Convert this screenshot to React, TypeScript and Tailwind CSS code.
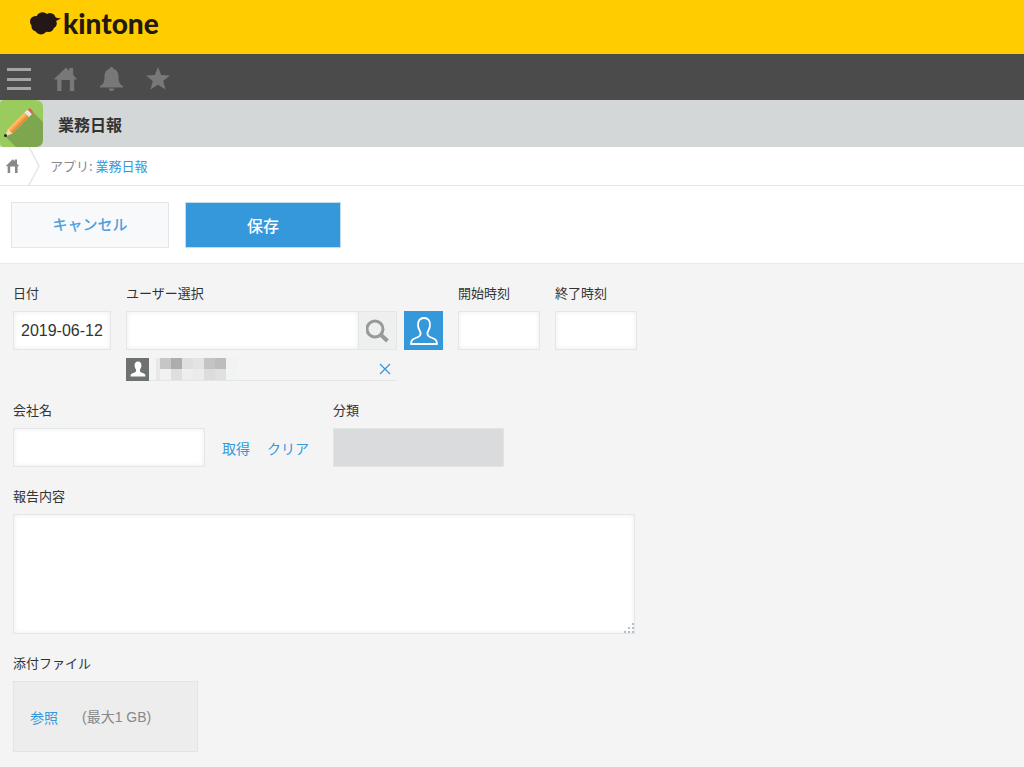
import type { ReactNode } from 'react';

const inputClass =
    'h-[39px] bg-white border border-[#e3e7e8] px-[7px] text-base text-[#333] shadow-[inset_0_0_5px_rgba(0,0,0,0.08)] focus:outline-none focus:border-[#3498db]';

const mosaic = [
    ['bg-[#c6c6c6]', 'bg-[#adadad]', 'bg-[#dfdfe0]', 'bg-[#e3e4e5]', 'bg-[#c4c4c4]', 'bg-[#bdbdbd]', 'bg-[#f1f3f2]', 'bg-[#f4f4f2]'],
    ['bg-[#f1f1f1]', 'bg-[#dedede]', 'bg-[#eeeeef]', 'bg-[#ebebec]', 'bg-[#dcdcdc]', 'bg-[#e0e0e0]', 'bg-[#f2f4f3]', 'bg-[#f4f4f4]'],
];

const HomeIcon = ({ className }: { className: string }) => (
    <svg viewBox="0 0 22 24" className={className} fill="currentColor">
        <path d="M11.500 .5 L14.700 4 V1 H18.700 V8 L22 11.500 V12.500 H19.700 V24 H15.300 V13 H7 V24 H2.700 V12.500 H0 V11.500 Z" />
    </svg>
);

const Logo = () => (
    <a href="#" className="flex items-center gap-[2px] text-[#231815]">
        <svg width="31" height="23" viewBox="0 0 31 23" fill="currentColor">
            <circle cx="5.500" cy="9.500" r="5.500" />
            <circle cx="12.500" cy="6.500" r="6.300" />
            <circle cx="20" cy="6.500" r="5.500" />
            <circle cx="22" cy="11.500" r="4.800" />
            <circle cx="18.500" cy="14.500" r="5.500" />
            <circle cx="11" cy="16.500" r="6" />
            <circle cx="6.500" cy="14.500" r="5" />
            <path d="M7 4 L17 2 L25 10 L22 17 L14 20 L4 17 Z" />
            <path d="M24 4.500 Q27 6.500 31 6.500 Q28 8 25 9.500 Z" />
        </svg>
        <span className="font-['Lato',sans-serif] text-[28px] leading-8 font-black">kintone</span>
    </a>
);

const PencilIcon = () => (
    <svg width="43" height="47" viewBox="0 0 43 47" className="shrink-0">
        <path d="M4 0 H35 Q43 0 43 8 V39 Q43 47 35 47 H4 Q0 47 0 43 V4 Q0 0 4 0 Z" fill="#9acb5f" />
        <path d="M32 11 L43 22 V39 Q43 47 35 47 H16 L5 36 Z" fill="#7ea64f" />
        <path d="M8 29 L24.500 12.500 L29 17 L12.500 33.500 Z" fill="#f5a54a" />
        <path d="M8 29 L24.500 12.500 L26 14 L9.500 30.500 Z" fill="#fcc168" />
        <path d="M11 32 L27.500 15.500 L29 17 L12.500 33.500 Z" fill="#e88a3c" />
        <path d="M24.500 12.500 L27.500 9.500 L32 14 L29 17 Z" fill="#e8e9ea" />
        <path d="M27.500 9.500 Q29.500 7.500 31.500 9.500 Q34 12 32 14 Z" fill="#ee5a50" />
        <path d="M8 29 L12.500 33.500 L5 36.500 Z" fill="#f6d9ae" />
        <circle cx="5.500" cy="35.500" r="1.500" fill="#222" />
    </svg>
);

const PersonIcon = ({ className }: { className: string }) => (
    <svg viewBox="0 0 28 28" className={className} strokeWidth="1.800" strokeLinejoin="round">
        <path d="M14 1 C9.500 1 8 4 8 8 C8 11.500 9.500 13 10.500 15.500 C11 18 10.500 19 8 20 L3.500 22 C1.500 23 1 24.500 1 27 H27 C27 24.500 26.500 23 24.500 22 L20 20 C17.500 19 17 18 17.500 15.500 C18.500 13 20 11.500 20 8 C20 4 18.500 1 14 1 Z" />
    </svg>
);

const Field = ({ label, htmlFor, children }: { label: string; htmlFor: string; children: ReactNode }) => (
    <div className="flex flex-col gap-[9px]">
        <label htmlFor={htmlFor} className="leading-[18px]">
            {label}
        </label>
        {children}
    </div>
);

const App = () => {
    return (
        <div className="min-h-screen flex flex-col bg-[#f4f4f4] font-['Noto_Sans_CJK_JP',sans-serif] text-[13px] text-[#333]">
            <header className="h-[54px] bg-[#ffcc00] px-[30px] pb-2 flex items-center">
                <Logo />
            </header>

            <nav className="h-[46px] bg-[#4b4b4b] px-[7px] pt-1 flex items-center gap-[23px] text-[#787878]">
                <button aria-label="メニュー" className="w-6 h-[22px] flex flex-col justify-between">
                    <span className="w-full h-[3px] bg-[#a5a5a5]"></span>
                    <span className="w-full h-[3px] bg-[#a5a5a5]"></span>
                    <span className="w-full h-[3px] bg-[#a5a5a5]"></span>
                </button>
                <button aria-label="ホーム">
                    <HomeIcon className="w-[23px] h-6" />
                </button>
                <button aria-label="通知">
                    <svg width="23" height="24" viewBox="0 0 23 24" fill="currentColor">
                        <path d="M11.500 0 Q13.500 0 13.500 2 C17.500 3 18.500 6 18.500 10 C18.500 15.500 20 17.500 23 19 V20.500 H0 V19 C3 17.500 4.500 15.500 4.500 10 C4.500 6 5.500 3 9.500 2 Q9.500 0 11.500 0 Z M8.500 21.500 H14.500 Q14 24 11.500 24 Q9 24 8.500 21.500 Z" />
                    </svg>
                </button>
                <button aria-label="お気に入り">
                    <svg width="24" height="24" viewBox="0 0 24 24" fill="currentColor">
                        <path d="M12 0 L15.200 8 L24 8.500 L17.200 14 L19.500 22.500 L12 17.800 L4.500 22.500 L6.800 14 L0 8.500 L8.800 8 Z" />
                    </svg>
                </button>
            </nav>

            <div className="h-[47px] bg-[#d4d7d7] flex items-center gap-[15px]">
                <PencilIcon />
                <h1 className="text-base font-bold">業務日報</h1>
            </div>

            <div className="h-[39px] bg-white border-b border-[#e3e7e8] flex items-center text-[#888]">
                <a href="#" aria-label="ホーム" className="pl-[6px]">
                    <HomeIcon className="w-[13px] h-[14px]" />
                </a>
                <svg width="12" height="38" viewBox="0 0 12 38" fill="none" stroke="#e3e7e8" strokeWidth="1.500" className="ml-[9px] mr-[10px]">
                    <path d="M1 0 L11 19 L1 38" />
                </svg>
                <p>
                    アプリ:{' '}
                    <a href="#" className="text-[#3498db]">
                        業務日報
                    </a>
                </p>
            </div>

            <div className="h-[78px] bg-white border-b border-[#e9ebeb] px-[11px] flex items-center gap-4">
                <button className="w-[158px] h-[46px] bg-[#f7f9fa] border border-[#e3e7e8] text-[15px] font-medium text-[#4f9fdc]">キャンセル</button>
                <button className="w-[156px] h-[46px] bg-[#3498db] border border-[#c3dcec] text-base font-medium text-white">保存</button>
            </div>

            <form className="flex-1 px-[13px] py-5 flex flex-col gap-5">
                <div className="flex flex-wrap items-start gap-[15px]">
                    <Field label="日付" htmlFor="date">
                        <input id="date" type="text" defaultValue="2019-06-12" className={`${inputClass} w-[98px] font-['Liberation_Sans',sans-serif]`} />
                    </Field>

                    <Field label="ユーザー選択" htmlFor="user">
                        <div className="flex flex-col gap-2">
                            <div className="flex gap-[7px]">
                                <div className="w-[271px] flex">
                                    <input id="user" type="text" className={`${inputClass} flex-1 min-w-0`} />
                                    <button type="button" aria-label="検索" className="w-[38px] h-[39px] bg-[#eeefef] border-y border-r border-[#e3e7e8] flex items-center justify-center">
                                        <svg width="24" height="24" viewBox="0 0 24 24" fill="none" stroke="#999" strokeWidth="3">
                                            <circle cx="9" cy="10" r="8" />
                                            <path d="M14.500 15.500 L21.500 22" strokeWidth="4" />
                                        </svg>
                                    </button>
                                </div>
                                <button type="button" aria-label="ユーザーを選択" className="size-[39px] bg-[#3498db] flex items-center justify-center">
                                    <PersonIcon className="size-7 fill-none stroke-white" />
                                </button>
                            </div>
                            <div className="w-[271px] h-[23px] border-b border-[#e3e7e8] flex items-center">
                                <span className="size-[23px] bg-[#6e7171] flex items-center justify-center">
                                    <PersonIcon className="size-4 fill-white" />
                                </span>
                                <div className="ml-[7px] flex border-l-4 border-[#e8e8e8]">
                                    <div className="flex flex-col">
                                        {mosaic.map((row, i) => (
                                            <div key={i} className="flex">
                                                {row.map((color, j) => (
                                                    <span key={j} className={`w-[11px] h-[11px] ${color}`}></span>
                                                ))}
                                            </div>
                                        ))}
                                    </div>
                                </div>
                                <button type="button" aria-label="削除" className="ml-auto mr-[6px]">
                                    <svg width="12" height="12" viewBox="0 0 12 12" stroke="#3498db" strokeWidth="1.300">
                                        <path d="M1 1 L11 11 M11 1 L1 11" />
                                    </svg>
                                </button>
                            </div>
                        </div>
                    </Field>

                    <Field label="開始時刻" htmlFor="start">
                        <input id="start" type="text" className={`${inputClass} w-[82px]`} />
                    </Field>
                    <Field label="終了時刻" htmlFor="end">
                        <input id="end" type="text" className={`${inputClass} w-[82px]`} />
                    </Field>
                </div>

                <div className="flex flex-wrap items-start gap-6">
                    <Field label="会社名" htmlFor="company">
                        <div className="flex items-center gap-[17px] text-sm text-[#3498db]">
                            <input id="company" type="text" className={`${inputClass} w-[192px]`} />
                            <button type="button">取得</button>
                            <button type="button">クリア</button>
                        </div>
                    </Field>
                    <Field label="分類" htmlFor="category">
                        <input id="category" type="text" disabled className="w-[171px] h-[39px] bg-[#dadbdd] border border-[#e3e5e5]" />
                    </Field>
                </div>

                <Field label="報告内容" htmlFor="report">
                    <div className="relative w-full max-w-[622px]">
                        <textarea id="report" className={`${inputClass} block w-full h-[120px] resize-none`}></textarea>
                        <svg width="12" height="12" viewBox="0 0 12 12" fill="#b4c0c8" className="absolute right-0 bottom-0">
                            <path d="M9 1h2v2h-2z M5 5h2v2h-2z M9 5h2v2h-2z M1 9h2v2h-2z M5 9h2v2h-2z M9 9h2v2h-2z" />
                        </svg>
                    </div>
                </Field>

                <Field label="添付ファイル" htmlFor="file">
                    <div className="w-[185px] h-[71px] bg-[#ededed] border border-[#e3e5e5] px-4 flex items-center gap-6 text-sm">
                        <button id="file" type="button" className="text-[#3498db]">
                            参照
                        </button>
                        <span className="font-['Liberation_Sans','Noto_Sans_CJK_JP',sans-serif] text-[#888]">(最大1 GB)</span>
                    </div>
                </Field>
            </form>
        </div>
    );
};

export default App;
